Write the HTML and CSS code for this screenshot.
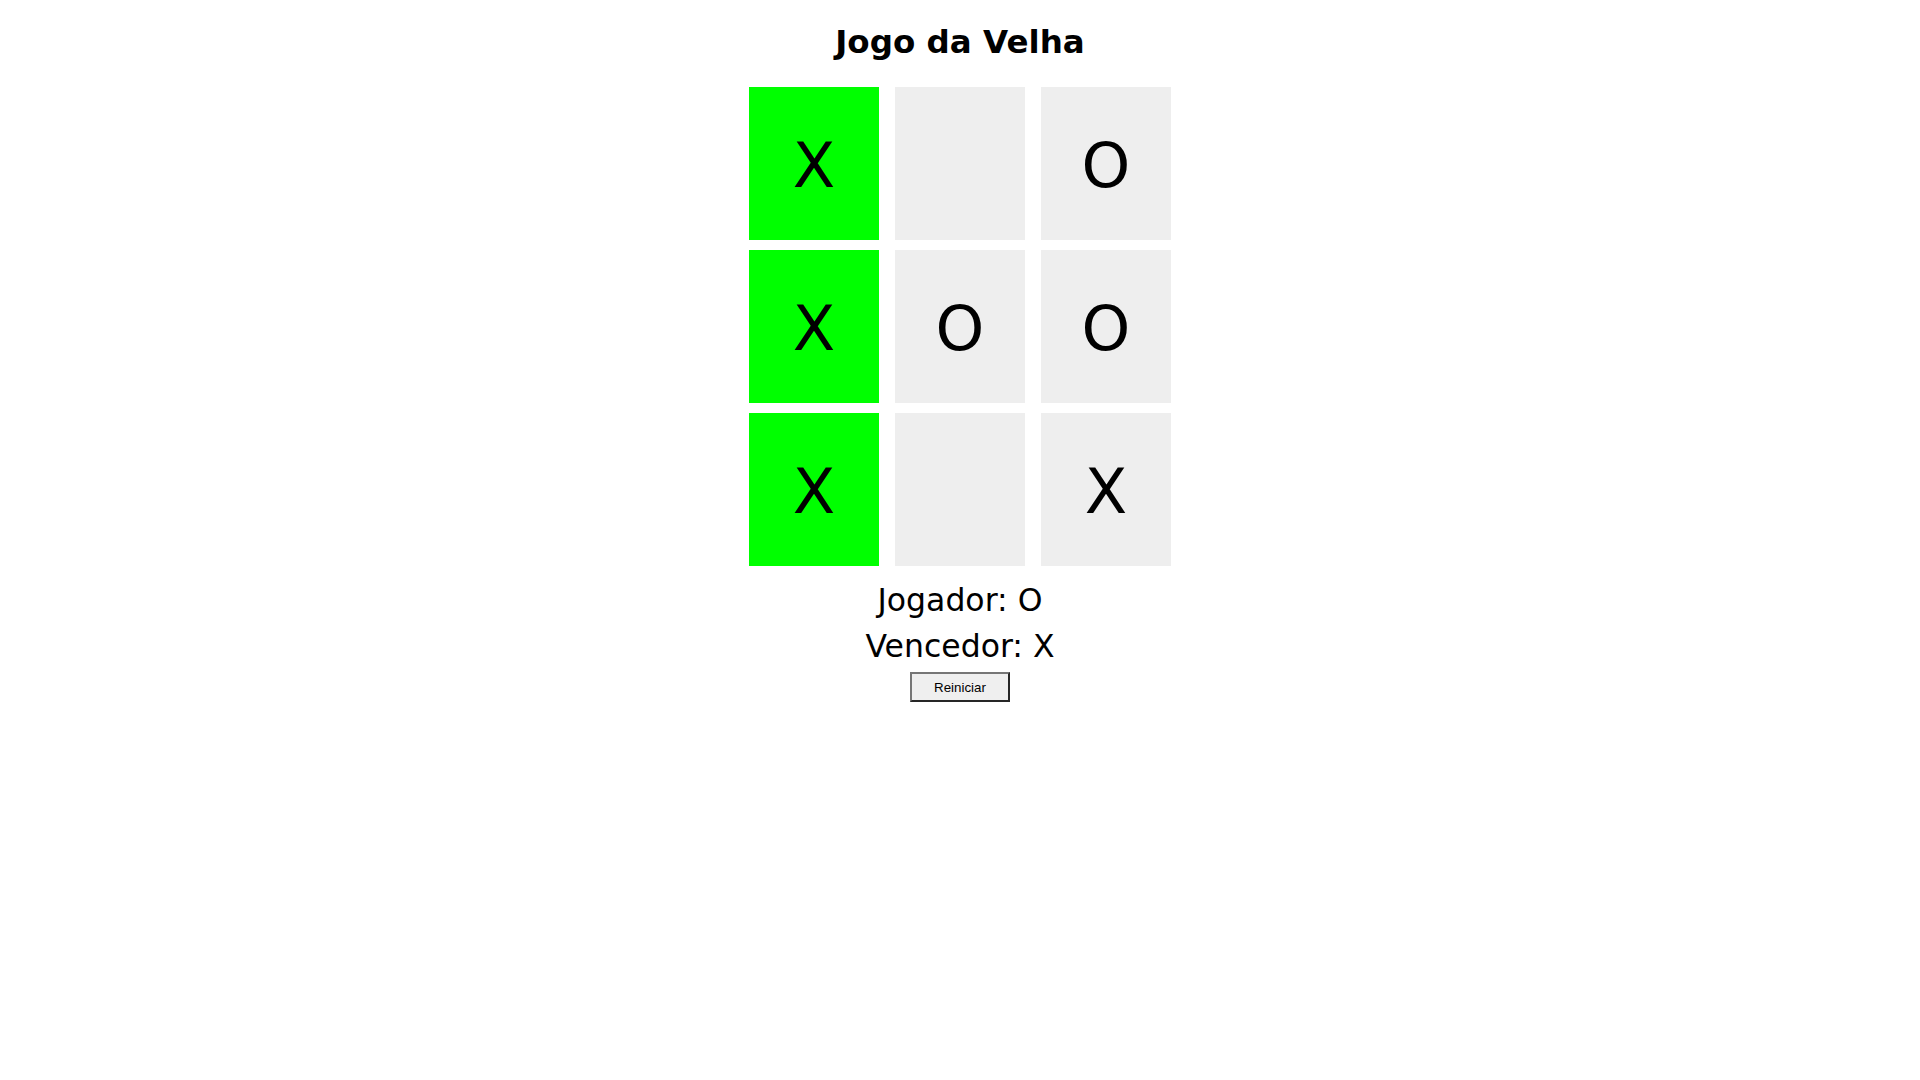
FILE: index.html
```html
<!DOCTYPE html>
<html lang="pt">
<head>
<meta charset="utf-8">
<title>Jogo da Velha</title>
<link rel="stylesheet" href="styles.css">
</head>
<body>
<main class="game">
  <h1 class="title">Jogo da Velha</h1>
  <div class="board">
    <div class="cell win">X</div>
    <div class="cell"></div>
    <div class="cell">O</div>
    <div class="cell win">X</div>
    <div class="cell">O</div>
    <div class="cell">O</div>
    <div class="cell win">X</div>
    <div class="cell"></div>
    <div class="cell">X</div>
  </div>
  <div class="status player">Jogador: O</div>
  <div class="status winner">Vencedor: X</div>
  <button class="reset" type="button">Reiniciar</button>
</main>
</body>
</html>
```
FILE: styles.css
```css
html, body {
  margin: 0;
  padding: 0;
  background: #ffffff;
}

body {
  font-family: "DejaVu Sans", Verdana, sans-serif;
  color: #000000;
}

.game {
  display: flex;
  flex-direction: column;
  align-items: center;
  padding-top: 24px;
}

.title {
  margin: 0;
  font-size: 32.5px;
  line-height: 37px;
  font-weight: bold;
}

.board {
  margin-top: 26px;
  display: grid;
  grid-template-columns: repeat(3, 130px);
  grid-template-rows: repeat(3, 153px);
  column-gap: 16px;
  row-gap: 10px;
}

.cell {
  background: #eeeeee;
  display: flex;
  align-items: center;
  justify-content: center;
  padding-top: 5px;
  font-size: 62px;
  line-height: 1;
}

.cell.win {
  background: #00ff00;
}

.status {
  font-size: 31.5px;
  line-height: 33px;
}

.player {
  margin-top: 18px;
}

.winner {
  margin-top: 13px;
}

.reset {
  margin-top: 9px;
  width: 100px;
  height: 30px;
  padding: 0;
  font-family: "Liberation Sans", Arial, sans-serif;
  font-size: 13.33px;
  color: #000000;
  background: #efefef;
  border-style: solid;
  border-width: 2px;
  border-color: #767676 #262626 #262626 #767676;
}
```
